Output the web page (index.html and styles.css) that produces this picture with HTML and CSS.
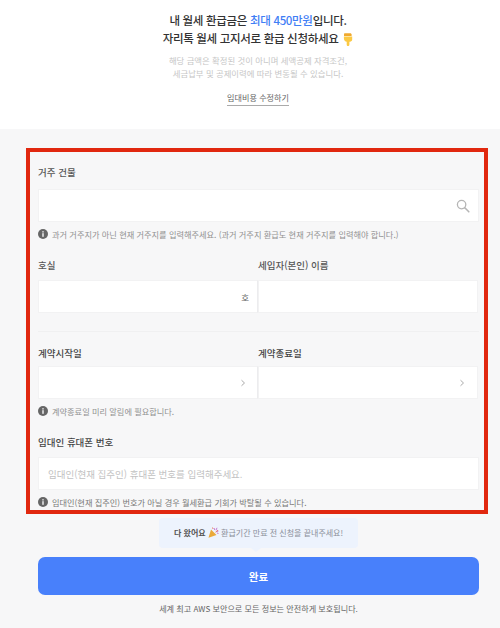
FILE: index.html
```html
<!DOCTYPE html>
<html lang="ko">
<head>
<meta charset="utf-8">
<title>월세 환급 신청</title>
<link rel="stylesheet" href="styles.css">
</head>
<body>
<header class="hero">
  <h1 class="hero-title">내 월세 환급금은 <span class="accent">최대 450만원</span>입니다.<br>자리톡 월세 고지서로 환급 신청하세요 <svg class="hand-icon" viewBox="0 0 10 13" width="10" height="13"><path d="M1 1.2C1 .6 1.5.2 2 .2H7.2C8 .2 8.6.8 8.6 1.5V3H1Z" fill="#f0a92e"/><path d="M.9 3.4H9.2V6.6C9.2 8 8.2 8.7 7 8.7H6.4V11.4C6.4 12.4 5.7 12.9 5 12.9C4.3 12.9 3.7 12.4 3.7 11.4V8.7C2.2 8.6.9 7.2.9 5.4Z" fill="#fbc943"/></svg></h1>
  <p class="hero-note">해당 금액은 확정된 것이 아니며 세액공제 자격조건,<br>세금납부 및 공제이력에 따라 변동될 수 있습니다.</p>
  <a class="hero-link">임대비용 수정하기</a>
</header>
<main class="content">
  <section class="form-frame">
    <div class="label label-first">거주 건물</div>
    <div class="field field-end">
      <svg class="search-icon" viewBox="0 0 14 14" width="14" height="14"><circle cx="5.6" cy="5.6" r="4.2" fill="none" stroke="#b5b5b5" stroke-width="1.3"/><path d="M8.8 8.8L12.8 12.8" stroke="#b5b5b5" stroke-width="1.6" stroke-linecap="round"/></svg>
    </div>
    <div class="hint">
      <svg class="info-icon" viewBox="0 0 10 10" width="10" height="10"><circle cx="5" cy="5" r="5" fill="#666"/><rect x="4.3" y="4.2" width="1.4" height="3.6" fill="#f7f7f8"/><rect x="4.3" y="2.2" width="1.4" height="1.3" fill="#f7f7f8"/></svg>
      <span>과거 거주지가 아닌 현재 거주지를 입력해주세요. (과거 거주지 환급도 현재 거주지를 입력해야 합니다.)</span>
    </div>
    <div class="two-col labels-row">
      <div class="label">호실</div>
      <div class="label">세입자(본인) 이름</div>
    </div>
    <div class="two-col">
      <div class="field field-end field-left"><span class="unit">호</span></div>
      <div class="field"></div>
    </div>
    <hr class="divider">
    <div class="two-col labels-row-tight">
      <div class="label label-strong">계약시작일</div>
      <div class="label label-strong">계약종료일</div>
    </div>
    <div class="two-col">
      <div class="field field-end field-left"><svg class="chevron chevron-left" viewBox="0 0 6 8" width="6" height="8"><path d="M1.5 1.2L4.5 4L1.5 6.8" fill="none" stroke="#aaa" stroke-width="1"/></svg></div>
      <div class="field field-end"><svg class="chevron" viewBox="0 0 6 8" width="6" height="8"><path d="M1.5 1.2L4.5 4L1.5 6.8" fill="none" stroke="#aaa" stroke-width="1"/></svg></div>
    </div>
    <div class="hint">
      <svg class="info-icon" viewBox="0 0 10 10" width="10" height="10"><circle cx="5" cy="5" r="5" fill="#666"/><rect x="4.3" y="4.2" width="1.4" height="3.6" fill="#f7f7f8"/><rect x="4.3" y="2.2" width="1.4" height="1.3" fill="#f7f7f8"/></svg>
      <span>계약종료일 미리 알림에 필요합니다.</span>
    </div>
    <div class="label label-strong label-phone">임대인 휴대폰 번호</div>
    <div class="field field-phone">임대인(현재 집주인) 휴대폰 번호를 입력해주세요.</div>
    <div class="hint hint-last">
      <svg class="info-icon" viewBox="0 0 10 10" width="10" height="10"><circle cx="5" cy="5" r="5" fill="#666"/><rect x="4.3" y="4.2" width="1.4" height="3.6" fill="#f7f7f8"/><rect x="4.3" y="2.2" width="1.4" height="1.3" fill="#f7f7f8"/></svg>
      <span>임대인(현재 집주인) 번호가 아닐 경우 월세환급 기회가 박탈될 수 있습니다.</span>
    </div>
  </section>
  <div class="tooltip"><b>다 왔어요</b> <svg class="party-icon" viewBox="0 0 11 11" width="11" height="11"><path d="M3 2.5L8.5 8L.5 10.8Z" fill="#eaa93a"/><path d="M6 1L6.8 3M9 .8L8 3.2M10.5 4L8.2 4.8M10.5 6.5L9 6" stroke="#c77ad0" stroke-width="1" fill="none"/><path d="M4.5 .5L5 2M7.5 5.2L10 3" stroke="#e8694a" stroke-width=".8" fill="none"/></svg> 환급기간 만료 전 신청을 끝내주세요!</div>
  <button class="submit" type="button">완료</button>
  <p class="secure">세계 최고 AWS 보안으로 모든 정보는 안전하게 보호됩니다.</p>
</main>
</body>
</html>
```

FILE: styles.css
```css
* { box-sizing: border-box; }
html, body { margin: 0; height: 100%; }
body {
  background: #f7f7f8;
  font-family: "Noto Sans CJK KR", "Noto Sans", sans-serif;
  color: #444;
  overflow: hidden;
}
.hero {
  height: 129px;
  padding: 12px 0 0 16px;
  background: #fff;
  text-align: center;
}
.hero-title {
  margin: 0;
  font-size: 11.5px;
  line-height: 17.5px;
  font-weight: 500;
  letter-spacing: -0.32px;
  color: #333;
}
.accent { color: #3f7ef5; }
.hand-icon { vertical-align: -3px; margin-left: 2px; }
.hero-note {
  margin: 7px 0 0;
  font-size: 8.4px;
  line-height: 13px;
  color: #c6c6c6;
}
.hero-link {
  display: inline-block;
  margin-top: 11px;
  padding-bottom: 1px;
  font-size: 8.1px;
  line-height: 13px;
  color: #666;
  border-bottom: 1px solid #aaa;
}
.content { padding: 19px 21px 0 38px; }
.form-frame {
  margin: 0 -9px 0 -12px;
  height: 366px;
  padding: 0 5px 0 8px;
  border: 4px solid #e1280f;
}
.label {
  font-size: 9.5px;
  line-height: 14px;
  font-weight: 500;
  color: #555;
}
.label-first { margin-top: 13px; }
.label-strong { color: #444; }
.label-phone { margin-top: 17px; }
.field {
  height: 33px;
  background: #fff;
  border: 1px solid #f2f2f3;
  display: flex;
  align-items: center;
  padding: 0 11px;
}
.label-first + .field { margin-top: 10px; }
.field-end { justify-content: flex-end; }
.field-left { padding-right: 8px; border-right: 1px solid #ececee; }
.search-icon { margin-right: -3px; }
.chevron { margin-right: 1px; }
.chevron-left { margin-right: 3px; }
.unit { font-size: 8.5px; color: #666; }
.hint {
  display: flex;
  align-items: center;
  gap: 4px;
  margin-top: 5px;
  height: 14px;
  font-size: 8.2px;
  line-height: 14px;
  color: #909090;
  white-space: nowrap;
}
.info-icon { flex: none; }
.two-col { display: grid; grid-template-columns: 220px 220px; }
.labels-row { margin-top: 17px; margin-bottom: 8px; }
.labels-row-tight { margin-top: 14px; margin-bottom: 6px; }
.divider {
  margin: 18px 0 0;
  border: 0;
  height: 1px;
  background: #f0f0f1;
}
.field-phone {
  margin-top: 8px;
  font-size: 9.5px;
  color: #c2c2c2;
  padding: 0 9px;
}
.hint-last { margin-top: 5px; color: #777; }
.tooltip {
  position: relative;
  width: 199px;
  height: 30px;
  margin: 4px 0 9px 121px;
  background: #edf3fd;
  border-radius: 4px;
  text-align: center;
  font-size: 8px;
  line-height: 30px;
  color: #8a8f99;
  white-space: nowrap;
}
.tooltip b { color: #555; font-weight: 700; }
.tooltip::after {
  content: "";
  position: absolute;
  left: 92px;
  bottom: -4px;
  border-left: 5px solid transparent;
  border-right: 5px solid transparent;
  border-top: 4px solid #edf3fd;
}
.party-icon { vertical-align: -2px; }
.submit {
  display: block;
  width: 441px;
  height: 38px;
  border: 0;
  border-radius: 7px;
  background: #4880fb;
  color: #fff;
  font-family: inherit;
  font-size: 10.5px;
  font-weight: 700;
}
.secure {
  margin: 7px 0 0;
  font-size: 8.1px;
  line-height: 13px;
  color: #666;
  text-align: center;
}
```
